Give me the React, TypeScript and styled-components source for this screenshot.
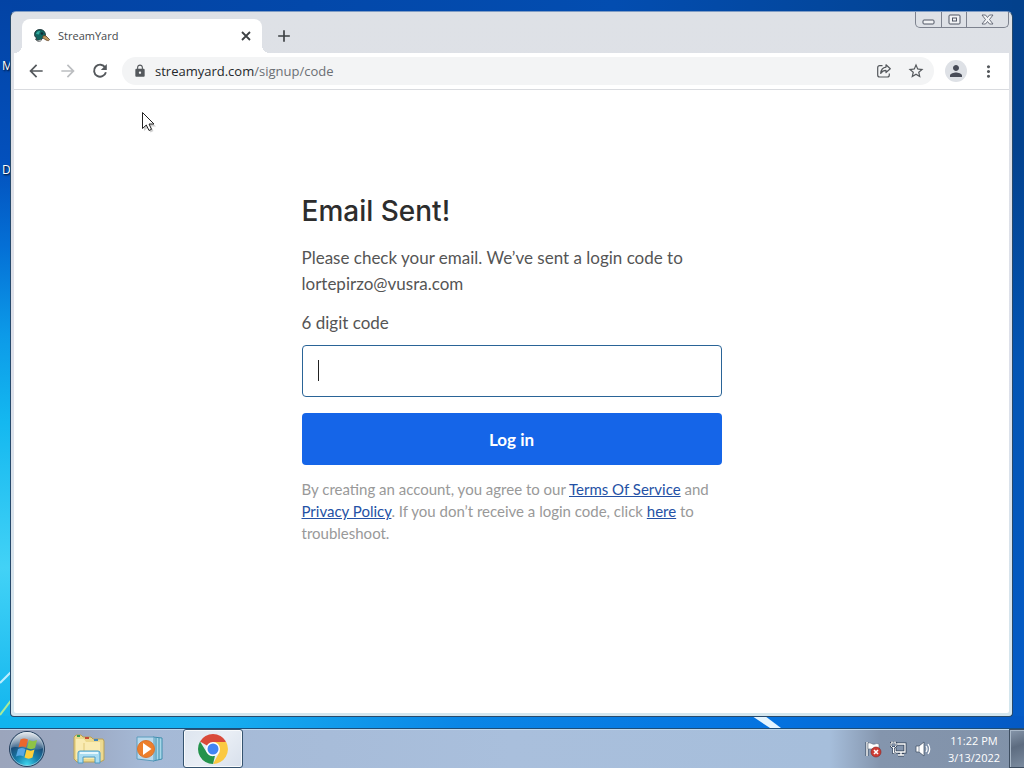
import React from "react";
import styled, { createGlobalStyle } from "styled-components";
import {
  MdAdd,
  MdArrowBack,
  MdArrowForward,
  MdLock,
  MdMoreVert,
  MdPerson,
  MdStarBorder,
} from "react-icons/md";

const systemFont = `"Open Sans", "Noto Sans", sans-serif`;
const pageFont = `Lato, "Open Sans", sans-serif`;

const GlobalStyle = createGlobalStyle`
  *, *::before, *::after { box-sizing: border-box; }
  body { margin: 0; font-family: ${systemFont}; }
  button, input { font: inherit; }
  svg { display: block; flex-shrink: 0; }
`;

/* ---------- Desktop ---------- */

const Screen = styled.div`
  display: flex;
  flex-direction: column;
  min-height: 100vh;
`;

const Desktop = styled.main`
  position: relative;
  display: flex;
  flex: 1;
  padding: 11px 11px 11px 10px;
  background:
    linear-gradient(90deg, #10b4ee 0%, #18b0f0 20%, #0a86e6 45%, #0473e0 75%, #0459c4 100%) bottom / 100% 12px no-repeat,
    linear-gradient(180deg, #0343a4 0%, #0350bc 22%, #0470d6 34%, #0c9ae8 46%, #14b8f0 58%, #42d2f6 78%, #10b4ee 100%) left / 12px 100% no-repeat,
    linear-gradient(180deg, #03418c 0%, #03428e 20%, #0455b4 50%, #045cc8 100%) right / 12px 100% no-repeat,
    linear-gradient(90deg, #0343a4 0%, #034db0 60%, #03418c 100%);
`;

const Streaks = styled.svg<{ $side: "left" | "bottom" }>`
  position: absolute;
  bottom: 0;
  left: ${(p) => (p.$side === "left" ? "0" : "73%")};
`;

const DesktopLabel = styled.span<{ $top: number }>`
  position: absolute;
  left: 2px;
  top: ${(p) => p.$top}px;
  color: #fff;
  font-size: 12px;
  line-height: 16px;
  text-shadow: 1px 1px 2px #000;
`;

const BrowserWindow = styled.section`
  position: relative;
  display: flex;
  flex: 1;
  flex-direction: column;
  min-width: 0;
  padding: 0 3px 3px 3px;
  border: 1px solid #27496b;
  border-top-color: #7f9cc4;
  border-radius: 6px 6px 4px 4px;
  background: linear-gradient(180deg, #dee1e6 0%, #dde0ea 50%, #d3e6ee 100%);
`;

/* ---------- Title bar ---------- */

const TitleBar = styled.header`
  display: flex;
  align-items: flex-end;
  height: 41px;
  padding-left: 8px;
`;

const Tab = styled.div`
  position: relative;
  display: flex;
  align-items: center;
  gap: 8px;
  width: 240px;
  height: 34px;
  padding: 0 8px 0 12px;
  border-radius: 8px 8px 0 0;
  background: #fff;
  color: #45494d;

  &::before,
  &::after {
    content: "";
    position: absolute;
    bottom: 0;
    width: 8px;
    height: 8px;
  }
  &::before {
    right: 100%;
    background: radial-gradient(circle at 0 0, transparent 8px, #fff 8px);
  }
  &::after {
    left: 100%;
    background: radial-gradient(circle at 100% 0, transparent 8px, #fff 8px);
  }
`;

const TabTitle = styled.span`
  flex: 1;
  font-size: 11px;
  line-height: 16px;
`;

const IconButton = styled.button<{ $size?: number; $color?: string }>`
  display: flex;
  flex-shrink: 0;
  align-items: center;
  justify-content: center;
  width: ${(p) => p.$size ?? 28}px;
  height: ${(p) => p.$size ?? 28}px;
  padding: 0;
  border: 0;
  border-radius: 50%;
  background: transparent;
  color: ${(p) => p.$color ?? "#54585c"};
`;

const NewTab = styled.div`
  margin: 0 0 3px 8px;
`;

const WindowControls = styled.div`
  display: flex;
  align-self: flex-start;
  height: 16px;
  margin-left: auto;
  border: 1px solid #7d828e;
  border-top: 0;
  border-radius: 0 0 5px 5px;
`;

const WindowControl = styled.button<{ $width: number }>`
  display: flex;
  align-items: center;
  justify-content: center;
  width: ${(p) => p.$width}px;
  padding: 0;
  border: 0;
  background: transparent;

  & + & {
    border-left: 1px solid #7d828e;
  }
`;

/* ---------- Toolbar ---------- */

const Toolbar = styled.nav`
  display: flex;
  align-items: center;
  gap: 4px;
  height: 37px;
  padding: 0 7px 0 8px;
  border-bottom: 1px solid #d9dbdf;
  background: #fff;
`;

const AddressBar = styled.div`
  display: flex;
  flex: 1;
  align-items: center;
  gap: 4px;
  height: 28px;
  margin: 0 4px;
  padding: 0 4px 0 11px;
  border-radius: 14px;
  background: #f3f4f5;
  color: #54585c;
`;

const Url = styled.span`
  flex: 1;
  margin-left: 4px;
  color: #6b6f74;
  font-size: 13px;
  line-height: 20px;
`;

const UrlHost = styled.span`
  color: #25282b;
`;

const Avatar = styled.span`
  display: flex;
  align-items: center;
  justify-content: center;
  width: 22px;
  height: 22px;
  border-radius: 50%;
  background: #dee1e6;
  color: #484c58;
`;

/* ---------- Page ---------- */

const Page = styled.article`
  flex: 1;
  padding: 101px 16px 40px;
  border-radius: 0 0 2px 2px;
  background: #fff;
  color: #555;
  font-family: ${pageFont};
`;

const Form = styled.form`
  display: flex;
  flex-direction: column;
  max-width: 420px;
  margin: 0 auto;
`;

const Heading = styled.h1`
  margin: 0 0 14px;
  color: #2d2d2d;
  font-family: Inter, sans-serif;
  font-size: 28px;
  font-weight: 500;
  line-height: 40px;
`;

const Intro = styled.p`
  margin: 0 0 13px;
  font-size: 17px;
  line-height: 26px;
`;

const FieldLabel = styled.label`
  margin-bottom: 9px;
  font-size: 17px;
  line-height: 26px;
`;

const Field = styled.div`
  position: relative;
  margin-bottom: 16px;
`;

const CodeInput = styled.input`
  display: block;
  width: 100%;
  height: 52px;
  padding: 0 16px;
  border: 1px solid #2a6497;
  border-radius: 4px;
  outline: 0;
  background: #fff;
  caret-color: transparent;
`;

const Caret = styled.span`
  position: absolute;
  top: 15px;
  left: 16px;
  width: 1px;
  height: 21px;
  background: #222;
`;

const LoginButton = styled.button`
  height: 52px;
  margin-bottom: 13px;
  border: 0;
  border-radius: 4px;
  background: #1565e8;
  color: #fff;
  font-size: 17px;
  font-weight: 700;
`;

const Terms = styled.p`
  margin: 0;
  color: #999;
  font-size: 15px;
  line-height: 22px;
`;

const TermsLink = styled.a`
  color: #2451a5;
  text-decoration: underline;
`;

const Cursor = styled.svg`
  position: absolute;
  top: 99px;
  left: 130px;
`;

/* ---------- Taskbar ---------- */

const Taskbar = styled.footer`
  display: flex;
  align-items: stretch;
  height: 40px;
  border-top: 1px solid #1d4d78;
  background: linear-gradient(90deg, #9ba5bc 0%, #9ba8c2 8%, #a5b9d6 14%, #a9bfdc 50%, #a6bedb 81%, #8495ad 86%, #8192a9 100%);
  box-shadow: inset 0 1px 0 #bfd8ec;
`;

const TaskButton = styled.button<{ $width: number; $active?: boolean }>`
  display: flex;
  align-items: center;
  justify-content: center;
  width: ${(p) => p.$width}px;
  margin-left: ${(p) => (p.$active ? 7 : 0)}px;
  padding: 0;
  border: 1px solid ${(p) => (p.$active ? "#35536f" : "transparent")};
  border-radius: 3px;
  background: ${(p) => (p.$active ? "linear-gradient(135deg, #dde5ef, #e9eef5 50%, #d8e0ec)" : "transparent")};
  box-shadow: ${(p) => (p.$active ? "inset 0 0 0 1px #f8fafc" : "none")};
`;

const Tray = styled.div`
  display: flex;
  align-items: center;
  gap: 8px;
  margin-left: auto;
`;

const Clock = styled.time`
  width: 56px;
  margin: 0 7px 0 6px;
  color: #fff;
  font-size: 11px;
  line-height: 17px;
  text-align: center;
  white-space: nowrap;
`;

const ShowDesktop = styled.button`
  width: 15px;
  padding: 0;
  border: 1px solid #3d4d60;
  border-right: 0;
  background: linear-gradient(160deg, #8797ab, #5d6c80 45%, #7b8b9f);
  box-shadow: inset 1px 1px 0 #a9b8c8;
`;

/* ---------- Drawings ---------- */

const DuckLogo = () => (
  <svg width="16" height="16" viewBox="0 0 16 16" aria-hidden="true">
    <path d="M.5 6.500C.5 3 3 1.500 6 1.500C9.500 1.500 11.500 4 11.500 7C11.300 9 9.500 9.500 8.500 10.500L6.500 12.500L3.500 13L1.500 11L3 10C1.500 9.500 .5 8.500 .5 6.500Z" fill="#12645f" stroke="#15282d" strokeWidth=".8" />
    <path d="M2 6C2.500 4 4 2.700 6 3L5 6.500Z" fill="#34aca0" />
    <circle cx="8" cy="5.500" r="1.300" fill="#102d33" />
    <path d="M2 11.500C4 13 6 12 7.500 11L7 13C5 14 3.500 13.500 2 11.500Z" fill="#e9eeee" stroke="#333" strokeWidth=".5" />
    <path d="M9.500 7.500L12 8L15.500 11.500C15 13.500 12.500 12.500 10.500 11L8.500 9.500Z" fill="#c49a60" stroke="#5a3e24" strokeWidth=".8" />
  </svg>
);

const CloseIcon = () => (
  <svg width="16" height="16" viewBox="0 0 16 16" fill="none" stroke="currentColor" strokeWidth="1.800" aria-hidden="true">
    <path d="M4 4L12 12M12 4L4 12" />
  </svg>
);

const ReloadIcon = () => (
  <svg width="20" height="20" viewBox="0 0 20 20" fill="none" stroke="currentColor" strokeWidth="1.900" aria-hidden="true">
    <path d="M15.200 6.500A6 6 0 1 0 15.900 11.200" />
    <path d="M16.800 3V9H10.800Z" fill="currentColor" stroke="none" />
  </svg>
);

const ShareIcon = () => (
  <svg width="16" height="16" viewBox="0 0 16 16" fill="none" stroke="currentColor" strokeWidth="1.200" strokeLinejoin="round" aria-hidden="true">
    <path d="M6.500 2.700H3.700C2.500 2.700 1.700 3.500 1.700 4.700V12C1.700 13.200 2.500 14 3.700 14H11.300C12.500 14 13.300 13.200 13.300 12V10.500" />
    <path d="M10 1.800L14.300 5.700L10 9.500V7.400C7.500 7.400 6 8.300 4.700 10.400C5 6.700 6.800 4.500 10 4.100Z" />
  </svg>
);

const StartOrb = () => (
  <svg width="38" height="38" viewBox="0 0 38 38" aria-hidden="true">
    <defs>
      <radialGradient id="orb" cx="50%" cy="95%" r="90%">
        <stop offset="0" stopColor="#3fd6ee" />
        <stop offset=".35" stopColor="#1782ae" />
        <stop offset=".7" stopColor="#1b4c78" />
        <stop offset="1" stopColor="#8597ac" />
      </radialGradient>
      <linearGradient id="gloss" x2="0" y2="1">
        <stop offset="0" stopColor="#fff" stopOpacity=".75" />
        <stop offset="1" stopColor="#fff" stopOpacity=".12" />
      </linearGradient>
    </defs>
    <circle cx="19" cy="19" r="17.500" fill="url(#orb)" stroke="#26405e" />
    <circle cx="19" cy="19" r="16.500" fill="none" stroke="#b4d2e3" strokeOpacity=".6" />
    <path d="M3 18A16 16 0 0 1 35 18C27 23 11 14 3 18Z" fill="url(#gloss)" />
    <path d="M12.500 9.500C15 8 17 8 20 9.500L18 17.500C15.500 16 13.500 16 10.500 17.500Z" fill="#ea672c" />
    <path d="M21 10C23.500 11.500 26 11.500 29 10L27 18C24 19.500 22 19.500 19 18Z" fill="#8fc445" />
    <path d="M10 19C13 17.500 15 17.500 17.500 19L15.500 26.500C13 25 11 25 8 26.500Z" fill="#56a7e4" />
    <path d="M18.500 19.500C21.500 21 24 21 26.500 19.500L24.500 27.500C22 29 19.500 29 16.500 27.500Z" fill="#fbcf3c" />
  </svg>
);

const ExplorerIcon = () => (
  <svg width="34" height="32" viewBox="0 0 34 32" aria-hidden="true">
    <path d="M2 4L4 2H9L11 4H19L21 6H31L32 8V27L28 29H5L2 26Z" fill="#ecd98d" stroke="#b89f56" />
    <path d="M4 6H12L14 9H30V26H4Z" fill="#f9ebb2" />
    <path d="M5 3H8" stroke="#3a9e52" strokeWidth="2" />
    <path d="M13 5H17" stroke="#c64b35" strokeWidth="2" />
    <path d="M22 7H26" stroke="#3f83bc" strokeWidth="2" />
    <path d="M12 10V25M29 9V26" stroke="#dfc878" />
    <path d="M6 30V20Q6 18 8 18H26Q28 18 28 20V30H23V24H11V30Z" fill="#a9dcf1" stroke="#4a9bc6" />
    <path d="M8 20H26" stroke="#e5f7fd" strokeWidth="2" />
  </svg>
);

const MediaIcon = () => (
  <svg width="28" height="28" viewBox="0 0 28 28" aria-hidden="true">
    <path d="M17 2L26 3V24L17 26Z" fill="#a8d7e8" stroke="#3f8eae" />
    <path d="M20 3V25M23 3V25" stroke="#3f8eae" />
    <path d="M1 2H18V26L1 24Z" fill="#b9d9ec" stroke="#5a9cbd" />
    <circle cx="10" cy="14" r="8.500" fill="#ed7f2b" stroke="#d77431" />
    <path d="M7 8L15.500 14L7 20Z" fill="#fff" />
  </svg>
);

const ChromeIcon = () => (
  <svg width="30" height="30" viewBox="0 0 30 30" aria-hidden="true">
    <path d="M15 15L2.010 7.500A15 15 0 0 1 27.990 7.500Z" fill="#d94a3a" />
    <path d="M15 8H28.200A15 15 0 0 1 15 30L21.500 18Z" fill="#fbc942" />
    <path d="M2.010 7.500L8.800 18.600A7 7 0 0 0 17 21.700L15 30A15 15 0 0 1 2.010 7.500Z" fill="#24934c" />
    <circle cx="15" cy="15" r="7" fill="#fff" />
    <circle cx="15" cy="15" r="5.500" fill="#4285f4" />
  </svg>
);

const FlagIcon = () => (
  <svg width="17" height="18" viewBox="0 0 17 18" aria-hidden="true">
    <path d="M2 2V16" stroke="#34445a" strokeWidth="3" />
    <path d="M2 2V16" stroke="#fff" strokeWidth="1.500" />
    <path d="M3 3C6 2 7 5 10 4C12 3 13 4 14 4V9H3Z" fill="#fff" stroke="#5a687a" strokeWidth=".6" />
    <circle cx="11" cy="12" r="5" fill="#cf3d35" stroke="#87221f" strokeWidth=".6" />
    <path d="M9 10L13 14M13 10L9 14" stroke="#fff" strokeWidth="1.600" />
  </svg>
);

const NetworkIcon = () => (
  <svg width="17" height="18" viewBox="0 0 17 18" fill="none" aria-hidden="true">
    <path d="M6 4H15V12H5V8M8 15H14M11 12V15" stroke="#34445a" strokeWidth="3" />
    <path d="M6 4H15V12H5V8M8 15H14M11 12V15" stroke="#fff" strokeWidth="1.300" />
    <path d="M1 3H6V6L4.500 7.500H2.500L1 6ZM2 1V3M5 1V3M3.500 7V13H6" stroke="#34445a" strokeWidth="2.200" />
    <path d="M1 3H6V6L4.500 7.500H2.500L1 6ZM2 1V3M5 1V3M3.500 7V13H6" stroke="#fff" strokeWidth="1" />
  </svg>
);

const SpeakerIcon = () => (
  <svg width="17" height="18" viewBox="0 0 17 18" fill="none" aria-hidden="true">
    <path d="M1 6H4L9 2V16L4 12H1Z" fill="#fff" stroke="#46566b" strokeWidth=".8" />
    <path d="M4 6V12" stroke="#8793a3" />
    <path d="M11 6Q13 9 11 12M13 4Q16.500 9 13 14" stroke="#fff" strokeWidth="1.200" />
  </svg>
);

export default function App() {
  return (
    <Screen>
      <GlobalStyle />
      <Desktop>
        <Streaks $side="left" width="12" height="60" viewBox="0 0 12 60" aria-hidden="true">
          <path d="M0 15L12 3" stroke="#bdeeff" strokeWidth="2" />
          <path d="M0 47L12 31" stroke="#a9ec9a" strokeWidth="2" />
        </Streaks>
        <Streaks $side="bottom" width="40" height="12" viewBox="0 0 40 12" aria-hidden="true">
          <path d="M4 0H17L33 12H22Z" fill="#e4f5ff" />
        </Streaks>
        <DesktopLabel $top={58}>M</DesktopLabel>
        <DesktopLabel $top={162}>D</DesktopLabel>
        <BrowserWindow aria-label="Browser">
          <TitleBar>
            <Tab>
              <DuckLogo />
              <TabTitle>StreamYard</TabTitle>
              <IconButton $size={16} $color="#3c4043" aria-label="Close tab">
                <CloseIcon />
              </IconButton>
            </Tab>
            <NewTab>
              <IconButton $color="#3c4043" aria-label="New tab">
                <MdAdd size={20} />
              </IconButton>
            </NewTab>
            <WindowControls>
              <WindowControl $width={25} aria-label="Minimize">
                <svg width="13" height="11" viewBox="0 0 13 11">
                  <rect x="1" y="6" width="11" height="4" rx="1" fill="#f2f3f5" stroke="#4f5462" />
                </svg>
              </WindowControl>
              <WindowControl $width={25} aria-label="Maximize">
                <svg width="13" height="11" viewBox="0 0 13 11" fill="#f2f3f5" stroke="#4f5462">
                  <rect x="1" y="1" width="11" height="9" rx="1" />
                  <rect x="4.500" y="4" width="4" height="3" />
                </svg>
              </WindowControl>
              <WindowControl $width={42} aria-label="Close">
                <svg width="13" height="11" viewBox="0 0 13 11">
                  <path d="M1 1H4.500L6.500 3.500L8.500 1H12L8.500 5.500L12 10H8.500L6.500 7.500L4.500 10H1L4.500 5.500Z" fill="#f2f3f5" stroke="#4f5462" strokeWidth=".8" />
                </svg>
              </WindowControl>
            </WindowControls>
          </TitleBar>
          <Toolbar aria-label="Navigation">
            <IconButton aria-label="Back"><MdArrowBack size={20} /></IconButton>
            <IconButton $color="#bcbec1" aria-label="Forward"><MdArrowForward size={20} /></IconButton>
            <IconButton aria-label="Reload"><ReloadIcon /></IconButton>
            <AddressBar>
              <MdLock size={14} />
              <Url><UrlHost>streamyard.com</UrlHost>/signup/code</Url>
              <IconButton aria-label="Share"><ShareIcon /></IconButton>
              <IconButton aria-label="Bookmark"><MdStarBorder size={18} /></IconButton>
            </AddressBar>
            <IconButton aria-label="Profile"><Avatar><MdPerson size={18} /></Avatar></IconButton>
            <IconButton aria-label="Menu"><MdMoreVert size={19} /></IconButton>
          </Toolbar>
          <Page>
            <Form onSubmit={(e) => e.preventDefault()}>
              <Heading>Email Sent!</Heading>
              <Intro>Please check your email. We’ve sent a login code to lortepirzo@vusra.com</Intro>
              <FieldLabel htmlFor="code">6 digit code</FieldLabel>
              <Field>
                <CodeInput id="code" type="text" inputMode="numeric" maxLength={6} />
                <Caret />
              </Field>
              <LoginButton type="submit">Log in</LoginButton>
              <Terms>
                By creating an account, you agree to our <TermsLink href="#terms">Terms Of Service</TermsLink> and{" "}
                <TermsLink href="#privacy">Privacy Policy</TermsLink>. If you don’t receive a login code, click{" "}
                <TermsLink href="#help">here</TermsLink> to troubleshoot.
              </Terms>
            </Form>
          </Page>
          <Cursor width="17" height="22" viewBox="0 0 17 22" aria-hidden="true">
            <path d="M3 4V20L7 16.500L9.500 21.500L12.500 20L10 15.500H15Z" fill="#000" opacity=".18" />
            <path d="M1.500 1.500V17.500L5.300 14L8 19.500L10.500 18.300L8 13H13Z" fill="#fff" stroke="#222" />
          </Cursor>
        </BrowserWindow>
      </Desktop>
      <Taskbar>
        <TaskButton $width={54} aria-label="Start"><StartOrb /></TaskButton>
        <TaskButton $width={70} aria-label="File Explorer"><ExplorerIcon /></TaskButton>
        <TaskButton $width={52} aria-label="Media Player"><MediaIcon /></TaskButton>
        <TaskButton $width={60} $active aria-label="Chrome"><ChromeIcon /></TaskButton>
        <Tray>
          <FlagIcon />
          <NetworkIcon />
          <SpeakerIcon />
          <Clock>11:22 PM<br />3/13/2022</Clock>
        </Tray>
        <ShowDesktop aria-label="Show desktop" />
      </Taskbar>
    </Screen>
  );
}
